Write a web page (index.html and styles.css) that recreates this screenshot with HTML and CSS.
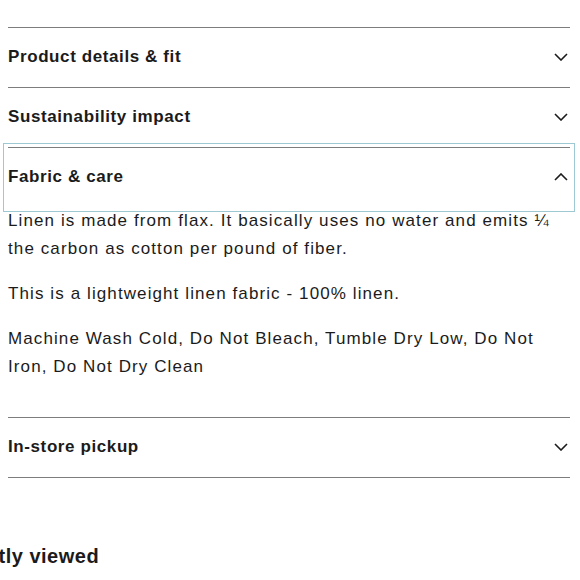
FILE: index.html
```html
<!DOCTYPE html>
<html lang="en">
<head>
<meta charset="utf-8">
<link rel="stylesheet" href="styles.css">
</head>
<body>
<div class="accordion">
  <div class="item">
    <button class="head"><span>Product details &amp; fit</span>
      <svg class="chev" viewBox="0 0 14 8"><path d="M1 1l6 6 6-6"/></svg></button>
  </div>
  <div class="item">
    <button class="head"><span>Sustainability impact</span>
      <svg class="chev" viewBox="0 0 14 8"><path d="M1 1l6 6 6-6"/></svg></button>
  </div>
  <div class="item open">
    <button class="head focused"><span>Fabric &amp; care</span>
      <svg class="chev" viewBox="0 0 14 8"><path d="M1 7l6-6 6 6"/></svg></button>
    <div class="content">
      <p>Linen is made from flax. It basically uses no water and emits ¼ the carbon as cotton per pound of fiber.</p>
      <p>This is a lightweight linen fabric - 100% linen.</p>
      <p>Machine Wash Cold, Do Not Bleach, Tumble Dry Low, Do Not Iron, Do Not Dry Clean</p>
    </div>
  </div>
  <div class="item last">
    <button class="head"><span>In-store pickup</span>
      <svg class="chev" viewBox="0 0 14 8"><path d="M1 1l6 6 6-6"/></svg></button>
  </div>
</div>
<h2 class="recent">Recently viewed</h2>
</body>
</html>
```
FILE: styles.css
```css
html, body { margin: 0; padding: 0; background: #fff; }
body {
  font-family: "Liberation Sans", Arial, sans-serif;
  color: #1b1b1b;
  overflow: hidden;
}
.accordion {
  margin: 27px 10px 0 8px;
}
.item {
  border-top: 1px solid #7d7d7d;
}
.item.last { border-bottom: 1px solid #7d7d7d; }
.head {
  display: flex;
  align-items: center;
  justify-content: space-between;
  width: 100%;
  height: 59px;
  padding: 0 2px 2px 0;
  margin: 0;
  border: 0;
  background: none;
  font-family: inherit;
  font-size: 17px;
  font-weight: 700;
  letter-spacing: 0.6px;
  color: #1b1b1b;
  text-align: left;
  cursor: pointer;
}
.focused {
  outline: 1px solid #9ec8d2;
  outline-offset: 4px;
}
.chev {
  width: 14px;
  height: 8px;
  fill: none;
  stroke: #1b1b1b;
  stroke-width: 1.6;
}
.content {
  padding: 0 0 36px;
  font-size: 17px;
  line-height: 28px;
  letter-spacing: 1.1px;
}
.content p { margin: 0 0 17px; }
.content p:last-child { margin-bottom: 0; }
.recent {
  margin: 64px 0 0 -64px;
  font-size: 20px;
  font-weight: 700;
  letter-spacing: 0.5px;
  line-height: 28px;
}
```
